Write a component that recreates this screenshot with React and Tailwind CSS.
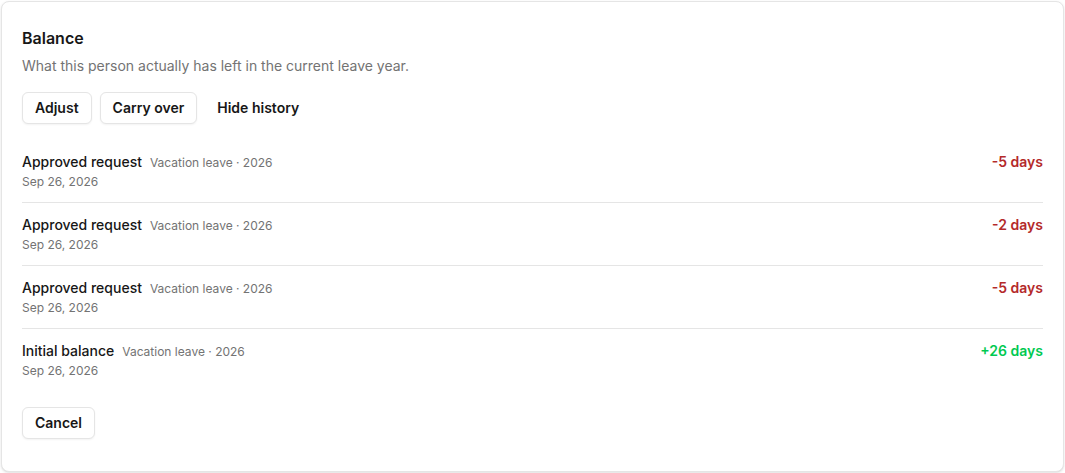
const entries = [
  { label: 'Approved request', meta: 'Vacation leave · 2026', date: 'Sep 26, 2026', amount: '-5 days', positive: false },
  { label: 'Approved request', meta: 'Vacation leave · 2026', date: 'Sep 26, 2026', amount: '-2 days', positive: false },
  { label: 'Approved request', meta: 'Vacation leave · 2026', date: 'Sep 26, 2026', amount: '-5 days', positive: false },
  { label: 'Initial balance', meta: 'Vacation leave · 2026', date: 'Sep 26, 2026', amount: '+26 days', positive: true },
];

export default function App() {
  return (
    <div className="min-h-screen bg-white p-px" style={{ fontFamily: 'Inter, "Noto Sans", sans-serif' }}>
      <div className="rounded-lg border border-neutral-200 bg-white px-5 pt-6 pb-8 shadow-sm">
        {/* Header */}
        <h2 className="text-base font-semibold leading-6 text-neutral-900">Balance</h2>
        <p className="mt-1.5 text-sm leading-5 text-neutral-500">
          What this person actually has left in the current leave year.
        </p>

        {/* Actions */}
        <div className="mt-4 flex items-center gap-2">
          <button className="h-8 rounded-md border border-neutral-200 bg-white px-3 text-sm font-semibold text-neutral-900 shadow-xs">
            Adjust
          </button>
          <button className="h-8 rounded-md border border-neutral-200 bg-white px-3 text-sm font-semibold text-neutral-900 shadow-xs">
            Carry over
          </button>
          <button className="h-8 rounded-md px-3 text-sm font-semibold text-neutral-900">Hide history</button>
        </div>

        {/* History */}
        <ul className="mt-4 divide-y divide-neutral-200">
          {entries.map((e, i) => (
            <li key={i} className="flex items-start justify-between py-3">
              <div>
                <div className="flex items-baseline gap-2">
                  <span className="text-sm font-medium leading-5 text-neutral-900">{e.label}</span>
                  <span className="text-xs text-neutral-500">{e.meta}</span>
                </div>
                <div className="mt-0.5 text-xs leading-4 text-neutral-500">{e.date}</div>
              </div>
              <span className={`text-sm font-semibold leading-5 ${e.positive ? 'text-green-500' : 'text-[#b42a2a]'}`}>
                {e.amount}
              </span>
            </li>
          ))}
        </ul>

        <button className="mt-4 h-8 rounded-md border border-neutral-200 bg-white px-3 text-sm font-semibold text-neutral-900 shadow-xs">
          Cancel
        </button>
      </div>
    </div>
  );
}
